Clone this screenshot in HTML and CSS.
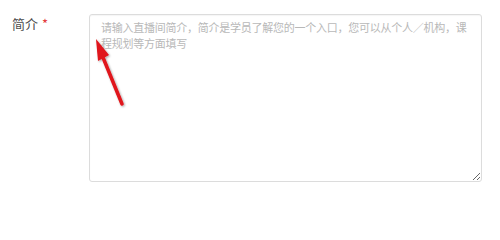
FILE: index.html
```html
<!DOCTYPE html>
<html lang="zh">
<head>
<meta charset="utf-8">
<link rel="stylesheet" href="styles.css">
</head>
<body>
<div class="form">
  <div class="field">
    <label class="label">简介<span class="req">*</span></label>
    <textarea class="intro" placeholder="请输入直播间简介，简介是学员了解您的一个入口，您可以从个人／机构，课程规划等方面填写"></textarea>
  </div>
</div>
<svg class="arrow" width="500" height="214" viewBox="0 0 500 214" xmlns="http://www.w3.org/2000/svg">
  <defs>
    <filter id="sh" x="-50%" y="-50%" width="200%" height="200%">
      <feDropShadow dx="1" dy="1" stdDeviation="1" flood-color="#000" flood-opacity="0.35"/>
    </filter>
  </defs>
  <g filter="url(#sh)">
    <line x1="122" y1="104" x2="102" y2="55" stroke="#e0141b" stroke-width="3.5" stroke-linecap="round"/>
    <polygon points="96,39 109,55 98,61" fill="#e0141b"/>
  </g>
</svg>
</body>
</html>
```
FILE: styles.css
```css
html, body {
  margin: 0;
  padding: 0;
  background: #fff;
}
body {
  font-family: "Noto Sans CJK SC", "Liberation Sans", sans-serif;
  width: 500px;
  height: 214px;
  position: relative;
  overflow: hidden;
}
.form {
  padding: 14px 0 0 12px;
}
.field {
  display: flex;
  align-items: flex-start;
}
.label {
  width: 77px;
  font-size: 13px;
  line-height: 18px;
  color: #4a4a4a;
  padding-top: 1px;
}
.req {
  color: #e4393c;
  margin-left: 4px;
  font-size: 13px;
  vertical-align: top;
  position: relative;
  top: 0;
}
.intro {
  box-sizing: border-box;
  width: 393px;
  height: 168px;
  margin: 0;
  padding: 4px 10px 4px 11px;
  border: 1px solid #dcdcdc;
  border-radius: 3px;
  font-family: "Noto Sans CJK SC", "Liberation Sans", sans-serif;
  font-size: 11px;
  line-height: 16px;
  letter-spacing: -0.25px;
  color: #333;
  outline: none;
  box-shadow: inset 0 1px 1px rgba(0,0,0,0.04);
}
.intro::placeholder {
  color: #b8b8b8;
}
.arrow {
  position: absolute;
  left: 0;
  top: 0;
  pointer-events: none;
}
```
